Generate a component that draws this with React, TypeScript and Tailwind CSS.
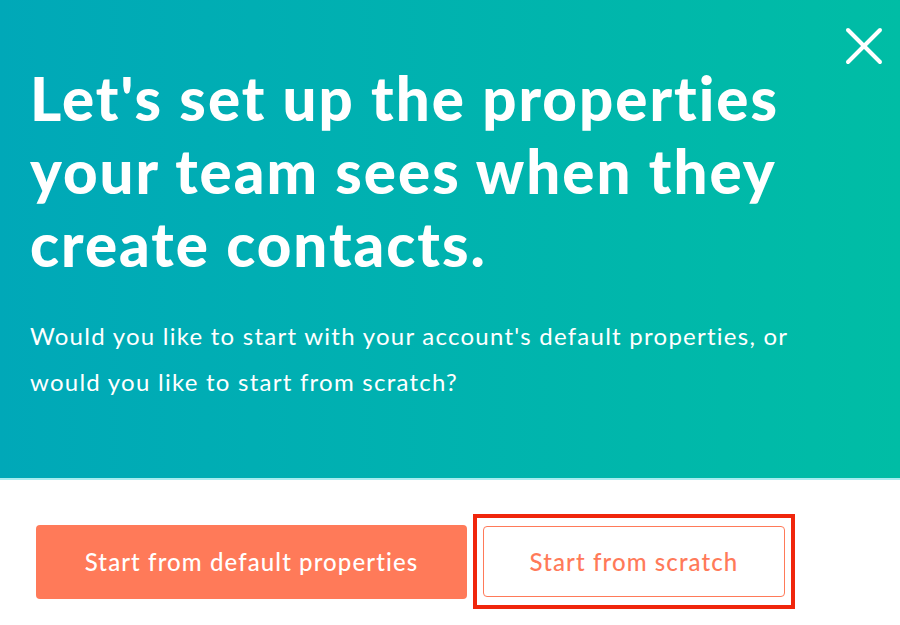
import { X } from "lucide-react"

export default function App() {
  return (
    <div className="flex h-[625px] w-[900px] flex-col overflow-hidden bg-white font-['Lato',sans-serif]">
      {/* header panel */}
      <div className="relative h-[480px] shrink-0 bg-gradient-to-r from-[#00a8b8] to-[#00bda5] pl-[30px] pt-[62px]">
        <button className="absolute right-[4px] top-[14px] text-white">
          <X size={64} strokeWidth={4} absoluteStrokeWidth />
        </button>
        <h1 className="text-[60px] font-black leading-[73px] tracking-[2px] text-white">
          Let's set up the properties
          <br />
          your team sees when they
          <br />
          create contacts.
        </h1>
        <p className="mt-[32px] text-[24px] leading-[46px] tracking-[1.25px] text-white">
          Would you like to start with your account's default properties, or
          <br />
          would you like to start from scratch?
        </p>
        <div className="absolute bottom-0 left-0 h-[2px] w-full bg-[#a8ecef]" />
      </div>

      {/* actions */}
      <div className="flex items-center gap-[6px] pl-[36px] pt-[34px]">
        <button className="h-[74px] w-[431px] rounded-[4px] bg-[#ff7a59] text-[24px] font-medium tracking-[1.1px] text-white">
          Start from default properties
        </button>
        <div className="border-[4px] border-[#f0260c] px-[6px] py-[8px]">
          <button className="h-[71px] w-[302px] rounded-[4px] border border-[#ff7a59] bg-white text-[24px] font-medium tracking-[1.1px] text-[#ff7a59]">
            Start from scratch
          </button>
        </div>
      </div>
    </div>
  )
}
